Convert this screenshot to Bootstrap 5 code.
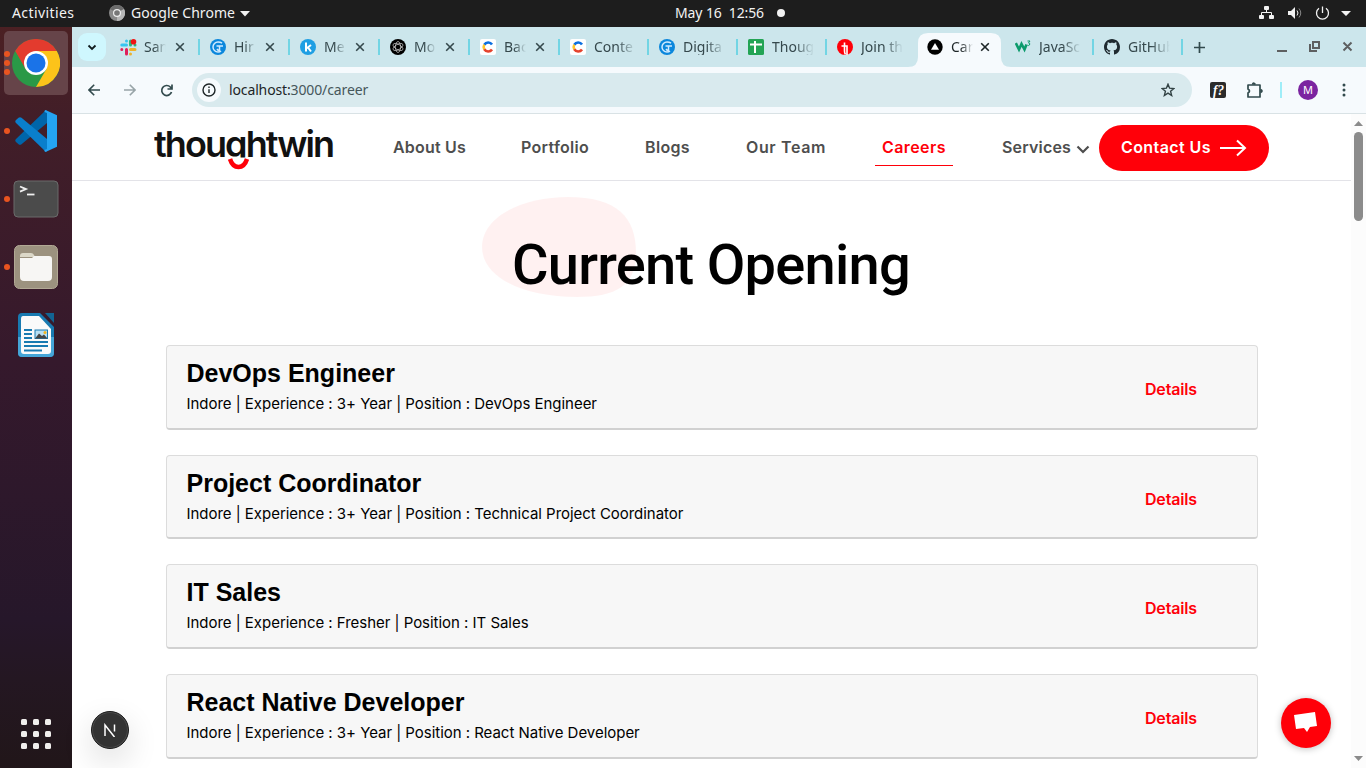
<!DOCTYPE html>
<html lang="en">
<head>
<meta charset="utf-8">
<meta name="viewport" content="width=device-width, initial-scale=1">
<title>Careers</title>
<link href="https://cdn.jsdelivr.net/npm/bootstrap@5.3.0/dist/css/bootstrap.min.css" rel="stylesheet">
<style>
body{width:1366px;height:768px;overflow:hidden;font-family:"Noto Sans",sans-serif;font-size:14px;line-height:1.2;color:#000}
svg{display:block;flex:none}
.sysbar{height:27px;background:#1d1d1d;color:#f2f2f2;font-size:14px}
.sysbar .act{margin-left:12px;letter-spacing:.4px}
.sysbar .app{left:131px;top:5px;letter-spacing:.05px}
.sysbar .clock{left:675px;top:5px;white-space:pre;letter-spacing:-.11px}
.dock{width:72px;background:linear-gradient(#4b2023 0,#421e28 12%,#35192c 45%,#26172a 80%,#241722 88%,#211619 100%)}
.tile{width:64px;height:64px;border-radius:5px}
.tile.on{background:#664449}
.dots{left:0;top:0;height:64px;width:6px;gap:3px}
.dots i{width:6px;height:6px;border-radius:50%;background:#e95420}
.strip{height:40px;background:#cce6ec;color:#35484c}
.strip-btn{width:28px;height:28px;border-radius:9px;background:#cff7fe;margin:0 4px 0 6px}
.tabx{width:90px;height:40px;padding-left:10px;position:relative}
.tabx.w89{width:89px}
.tabx.cur{width:88px;color:#1d2527}
.tabx.sep::after{content:"";position:absolute;right:0;top:12px;width:2px;height:16px;background:#72d5e4}
.tabx .lbl{width:22px;margin-left:8px;overflow:hidden;white-space:nowrap;-webkit-mask:linear-gradient(90deg,#000 45%,transparent);mask:linear-gradient(90deg,#000 45%,transparent)}
.tabx .lbl.long{width:42px;-webkit-mask-image:linear-gradient(90deg,#000 55%,transparent);mask-image:linear-gradient(90deg,#000 55%,transparent)}
.tabx .x{position:absolute;left:65px;top:15px}
.cur-shape{position:absolute;left:-9px;top:6px}
.tools{height:47px;background:#f6fafd;border-bottom:1px solid #d9e2e5;color:#324a4d}
.omni{width:1000px;height:34px;border-radius:17px;background:#d9eaee}
.omni .info{width:24px;height:24px;border-radius:50%;background:#f6fafd}
.omni .addr{margin-left:8px;color:#1d2527;letter-spacing:-.13px}
.site{height:654px;overflow:hidden}
.site-nav{height:67px;padding-top:2px;border-bottom:1px solid #e3e3e8;font-family:Inter,sans-serif;font-weight:600;font-size:16px;color:#4e4e4e}
.site-nav a{color:inherit;text-decoration:none;white-space:nowrap}
.site-nav a.item{width:73px;margin-left:58px;letter-spacing:.2px}
.site-nav a.port{width:68px;margin-left:55px;letter-spacing:.28px}
.site-nav a.blog{width:45px;margin-left:56px;letter-spacing:.34px}
.site-nav a.team{width:81px;margin-left:56px;letter-spacing:.62px}
.site-nav a.now{width:78px;height:36px;padding:8px 7px 0;margin-left:48px;border-bottom:1px solid #ff0009;letter-spacing:.42px;color:#ff0009}
.site-nav a.serv{width:69px;margin-left:49px;letter-spacing:.17px}
.logo{width:181px;height:42px;margin:1px 0 0 82px}
.cta{width:170px;height:46px;border-radius:23px;background:#ff0009;color:#fff!important;letter-spacing:.42px}
.hero-title{height:164px;font-family:Roboto,sans-serif;font-weight:500;font-size:56px;line-height:60px;letter-spacing:-.73px}
.jobs{padding:0 93px 0 94px;gap:25px}
.job{height:84.67px;border:1px solid #dcdcdc;border-bottom:2px solid #d1d1d1;border-radius:4px;background:#f7f7f7;padding:12px 20px 0 19.5px}
.job h2{font:700 25px/30px "Liberation Sans",sans-serif;margin:0}
.job p{font:400 15px/20px Inter,sans-serif;letter-spacing:-.03px;margin:6px 0 0}
.job a{font:600 16px/20px Inter,sans-serif;letter-spacing:-.15px;color:#ff0009;text-decoration:none;margin-right:40px;margin-top:21px}
.rail{width:15px;background:#fcfcfc}
.thumb{width:9px;height:89px;border-radius:5px;background:#8b8b8b}
.next-btn{left:91px;top:711px;width:38px;height:38px;border-radius:50%;background:#333;border:1.5px solid #1b1b1b;box-shadow:inset 0 0 0 1px #4b4b4b,0 12px 32px rgba(0,0,0,.14)}
.chat-btn{left:1281px;top:698px;width:50px;height:50px;border-radius:50%;background:#ff0009;box-shadow:0 1px 7px rgba(0,0,0,.25);padding:0 2px 3px 0}
</style>
</head>
<body class="d-flex flex-column">
<svg width="0" height="0" class="position-absolute">
<defs>
<symbol id="x" viewBox="0 0 10 10"><path d="M1.2 1.2l7.6 7.6M8.800 1.200L1.200 8.800" stroke="currentColor" stroke-width="1.6" fill="none"/></symbol>
<symbol id="gt" viewBox="0 0 16 16"><circle cx="8" cy="8" r="8" fill="#0b87dc"/><path d="M12 4.200Q10.500 3 8 3A5 5 0 1 0 8 13Q10 13 11 12M6.500 7H13M9.500 7v4.500Q8 11.500 7 10" stroke="#cfeaff" stroke-width="1.500" fill="none"/></symbol>
<symbol id="cu" viewBox="0 0 16 16"><rect width="16" height="16" rx="2" fill="#fff"/><g fill="none" stroke-width="2.600"><path d="M4.300 5.700A4.600 4.600 0 0 1 12 5.500" stroke="#0b6fe0"/><path d="M4.300 5.700A4.600 4.600 0 0 0 4.300 10.300" stroke="#ffc72c"/><path d="M4.300 10.300A4.600 4.600 0 0 0 12 10.500" stroke="#e5432d"/></g></symbol>
</defs>
</svg>

<header class="sysbar position-relative d-flex align-items-center flex-shrink-0">
<span class="act">Activities</span>
<svg class="position-absolute" style="left:109px;top:5px" width="16" height="16" viewBox="0 0 16 16"><circle cx="8" cy="8" r="8" fill="#8a8a8a"/><path d="M8 8L1 4A8 8 0 0 1 15 4Z" fill="#6c6c6c"/><path d="M8 8L15 4A8 8 0 0 1 8 16Z" fill="#b5b5b5"/><circle cx="8" cy="8" r="4" fill="#eee"/><circle cx="8" cy="8" r="2.800" fill="#777"/></svg>
<span class="app position-absolute">Google Chrome</span>
<svg class="position-absolute" style="left:240px;top:11px" width="10" height="6"><path d="M0 0h10L5 5.500z" fill="#f2f2f2"/></svg>
<span class="clock position-absolute">May 16  12:56</span>
<svg class="position-absolute" style="left:777px;top:9px" width="8" height="8"><circle cx="4" cy="4" r="4" fill="#f2f2f2"/></svg>
<svg class="position-absolute" style="left:1258px;top:5px" width="96" height="16" viewBox="0 0 96 16"><g fill="#f2f2f2"><rect x="6" y="1" width="5" height="4" rx="1"/><rect x="1" y="10" width="5" height="4" rx="1"/><rect x="11" y="10" width="5" height="4" rx="1"/><path d="M30 6h3l4-4v12l-4-4h-3zM83 6h10l-5 5z"/></g><g fill="none" stroke="#f2f2f2"><path d="M8.500 5v3M3.500 11V7.500h10V11M39 5.500q2 2.500 0 5"/><path d="M41 3.500q3.500 4.500 0 9" stroke="#888"/><path d="M61 3.300a6 6 0 1 0 7 0M64.500 1.500V8" stroke-width="1.300"/></g></svg>
</header>

<div class="d-flex flex-grow-1">
<aside class="dock d-flex flex-column align-items-center flex-shrink-0 position-relative pt-1 gap-1">
<div class="tile on d-flex align-items-center justify-content-center">
<svg width="48" height="48" viewBox="0 0 48 48"><circle cx="24" cy="24" r="24" fill="#2a9947"/><path d="M3.200 12A24 24 0 0 1 44.800 12H24L13.600 30Z" fill="#e33b2e"/><path d="M44.800 12A24 24 0 0 1 24 48L34.400 30 24 12Z" fill="#fcc31a"/><circle cx="24" cy="24" r="12" fill="#fff"/><circle cx="24" cy="24" r="9.500" fill="#1a73e8"/></svg></div>
<div class="tile d-flex align-items-center justify-content-center">
<svg width="42" height="42" viewBox="0 0 42 42"><path d="M1 29q-1.500 1.500 0 3l2.500 2.300q1.500 1 3 0L32 13V0.500L30 1Z" fill="#0065a9"/><path d="M1 13q-1.500-1.500 0-3l2.500-2.300q1.500-1 3 0L32 29v12.500L30 41Z" fill="#0a7fcc"/><path d="M30.500 0L42 5.200V36.800L30.500 42q-1.500-.5-1-2l2.500-1V3l-2.500-1q-.3-1.500 1-2Z" fill="#24a4f2"/></svg></div>
<div class="tile d-flex align-items-center justify-content-center">
<svg width="46" height="38" viewBox="0 0 46 38"><rect x="1" y="1" width="44" height="36" rx="4" fill="#4b4b4b" stroke="#6b6b6b"/><path d="M7 6.500l6 2.600-6 2.600" stroke="#eee" stroke-width="1.800" fill="none"/><path d="M14 14.500h7.500" stroke="#eee" stroke-width="1.800"/></svg></div>
<div class="tile d-flex align-items-center justify-content-center">
<svg width="46" height="46" viewBox="0 0 46 46"><rect x="1.500" y="1.500" width="43" height="43" rx="5" fill="#9c927f" stroke="#b2a995"/><path d="M7 12q0-3 3-3h8q2 0 3 2l1 2H7z" fill="#dcd8c8"/><path d="M7 14h12l2-2h15q3 0 3 3v18q0 4-4 4H11q-4 0-4-4z" fill="#f7f6f4"/></svg></div>
<div class="tile d-flex align-items-center justify-content-center">
<svg width="38" height="46" viewBox="0 0 38 46"><path d="M5 1h18l14 14v26q0 4-4 4H5q-4 0-4-4V5q0-4 4-4z" fill="#187ab1"/><path d="M1 25h36v16q0 4-4 4H5q-4 0-4-4z" fill="#45a5d7"/><path d="M6 4h16l12 13v22q0 3-3 3H7q-3 0-3-3V7q0-3 2-3z" fill="#fafafa"/><path d="M28 1h9v10z" fill="#126493"/><path d="M7 18h8M7 22h8M7 26h8M7 30h24M7 34h24M7 38.500h18" stroke="#187ab1" stroke-width="2"/><rect x="18" y="18" width="12.500" height="8.500" fill="#b9dff2" stroke="#187ab1"/><path d="M18 26.500l4-5 3 2.500 2-1.500 3.500 4z" fill="#444"/><circle cx="28" cy="20.500" r="1.500" fill="#f3b41b"/></svg></div>
<div class="dots position-absolute d-flex flex-column justify-content-center" style="left:4px;top:4px"><i></i><i></i><i></i></div>
<div class="dots position-absolute d-flex flex-column justify-content-center" style="left:4px;top:72px"><i></i></div>
<div class="dots position-absolute d-flex flex-column justify-content-center" style="left:4px;top:140px"><i></i></div>
<div class="dots position-absolute d-flex flex-column justify-content-center" style="left:4px;top:208px"><i></i></div>
<svg class="mt-auto" style="margin-bottom:19px" width="30" height="30" viewBox="0 0 30 30" fill="#f0eeec"><rect width="6" height="6" rx="1.500"/><rect x="12" width="6" height="6" rx="1.500"/><rect x="24" width="6" height="6" rx="1.500"/><rect y="12" width="6" height="6" rx="1.500"/><rect x="12" y="12" width="6" height="6" rx="1.500"/><rect x="24" y="12" width="6" height="6" rx="1.500"/><rect y="24" width="6" height="6" rx="1.500"/><rect x="12" y="24" width="6" height="6" rx="1.500"/><rect x="24" y="24" width="6" height="6" rx="1.500"/></svg>
</aside>

<div class="flex-grow-1 d-flex flex-column">
<div class="strip d-flex align-items-center flex-shrink-0">
<div class="strip-btn d-flex align-items-center justify-content-center"><svg width="10" height="7"><path d="M1.500 1.500L5 5l3.500-3.500" stroke="#101c1e" stroke-width="1.800" fill="none"/></svg></div>
<div class="tabx sep d-flex align-items-center"><svg width="17" height="17" viewBox="0 0 17 17" fill="none" stroke-width="3" stroke-linecap="round"><path d="M1.800 6H6.500M6.500 2v0" stroke="#36c5f0"/><path d="M10.500 2V6M15 6h0" stroke="#2eb67d"/><path d="M10.500 10.500H15M10.500 15v0" stroke="#ecb22e"/><path d="M6.500 10.500V15M1.800 10.500v0" stroke="#e01e5a"/><circle cx="13.500" cy="2.800" r="2.800" fill="#f01414" stroke="none"/></svg><span class="lbl" style="margin-left:7px">San</span><svg class="x" width="10" height="10"><use href="#x"/></svg></div>
<div class="tabx sep d-flex align-items-center"><svg width="16" height="16"><use href="#gt"/></svg><span class="lbl">Hir</span><svg class="x" width="10" height="10"><use href="#x"/></svg></div>
<div class="tabx sep d-flex align-items-center"><svg width="16" height="16" viewBox="0 0 16 16"><circle cx="8" cy="8" r="8" fill="#1f9fe3"/><path d="M6 3.500v9M11 6L6.800 9.300M8 8.500l3 4" stroke="#fff" stroke-width="2" fill="none"/></svg><span class="lbl">Me</span><svg class="x" width="10" height="10"><use href="#x"/></svg></div>
<div class="tabx sep d-flex align-items-center"><svg width="16" height="16" viewBox="0 0 16 16"><circle cx="8" cy="8" r="8" fill="#000"/><g fill="none" stroke="#ccc" stroke-width=".7"><ellipse cx="8" cy="8" rx="2.600" ry="5.500"/><ellipse cx="8" cy="8" rx="2.600" ry="5.500" transform="rotate(60 8 8)"/><ellipse cx="8" cy="8" rx="2.600" ry="5.500" transform="rotate(120 8 8)"/></g></svg><span class="lbl">Mo</span><svg class="x" width="10" height="10"><use href="#x"/></svg></div>
<div class="tabx sep d-flex align-items-center"><svg width="16" height="16"><use href="#cu"/></svg><span class="lbl">Bac</span><svg class="x" width="10" height="10"><use href="#x"/></svg></div>
<div class="tabx w89 sep d-flex align-items-center"><svg width="16" height="16"><use href="#cu"/></svg><span class="lbl long">Conte</span></div>
<div class="tabx w89 sep d-flex align-items-center"><svg width="16" height="16"><use href="#gt"/></svg><span class="lbl long">Digita</span></div>
<div class="tabx w89 sep d-flex align-items-center"><svg width="16" height="16"><rect width="16" height="16" rx="1.500" fill="#23a455"/><path d="M2 5.500h12M7 2v12" stroke="#fff" stroke-width="2"/></svg><span class="lbl long">Thoug</span></div>
<div class="tabx d-flex align-items-center"><svg width="16" height="16" viewBox="0 0 16 16"><circle cx="8" cy="8" r="8" fill="#ff0009"/><path d="M7.500 3.500V12q0 2 1 3.500M4.500 7h5.500v9" stroke="#fff" stroke-width="1.600" fill="none"/></svg><span class="lbl long">Join th</span></div>
<div class="tabx cur d-flex align-items-center"><svg class="cur-shape" width="104" height="34"><path d="M0 34Q10 34 10 24V10Q10 0 20 0H83Q93 0 93 10V24Q93 34 103 34Z" fill="#f6fafd"/></svg><svg class="position-relative" width="16" height="16"><circle cx="8" cy="8" r="7.700" fill="#000"/><path d="M8 4l4 6.800H4z" fill="#fff"/></svg><span class="lbl">Car</span><svg class="x" style="left:63px" width="10" height="10"><use href="#x"/></svg></div>
<div class="tabx w89 sep d-flex align-items-center"><svg width="16" height="16" fill="none" stroke="#0c9b6c" stroke-width="2.600"><path d="M.800 4L4 10.500 6.500 5 9.500 10.500 11.500 5.500"/><path d="M12.500 2h2.500l-1.500 2q2 .3 1 2-1 1-2 .200" stroke-width="1"/></svg><span class="lbl long">JavaSc</span></div>
<div class="tabx w89 sep d-flex align-items-center"><svg width="16" height="16" viewBox="0 0 16 16" fill="#1f2a30"><path d="M8 0C3.580 0 0 3.580 0 8c0 3.540 2.290 6.530 5.470 7.590.4.070.55-.17.55-.38 0-.19-.01-.82-.01-1.490-2.010.37-2.530-.49-2.690-.94-.09-.23-.48-.94-.82-1.130-.28-.15-.68-.52-.01-.53.63-.01 1.080.58 1.230.82.72 1.210 1.870.87 2.330.66.07-.52.28-.87.51-1.070-1.780-.2-3.640-.89-3.640-3.950 0-.87.31-1.590.82-2.150-.08-.2-.36-1.020.08-2.120 0 0 .67-.21 2.200.82.64-.18 1.320-.27 2-.27s1.360.09 2 .27c1.530-1.040 2.200-.82 2.200-.82.44 1.100.16 1.920.08 2.120.51.56.82 1.270.82 2.150 0 3.070-1.870 3.750-3.650 3.950.29.25.54.73.54 1.480 0 1.070-.01 1.930-.01 2.200 0 .21.15.46.55.38A8.010 8.010 0 0 0 16 8c0-4.420-3.580-8-8-8z"/></svg><span class="lbl long">GitHub</span></div>
<svg style="margin-left:11px" width="11" height="11"><path d="M5.500 0v11M0 5.500h11" stroke="#324a4d" stroke-width="1.700"/></svg>
<svg style="margin-left:72px" width="76" height="12" fill="none" stroke="#5d5f60" stroke-width="2"><path d="M0 10h10M36 1h6v6h-6zM33 3v7h7M66.500 1.500l8 8M74.500 1.500l-8 8"/></svg>
</div>

<div class="tools d-flex align-items-center flex-shrink-0">
<svg style="margin-left:16px" width="12" height="12" fill="none" stroke="#324a4d" stroke-width="1.600"><path d="M12 6H1M6.200.8L1 6l5.200 5.200"/></svg>
<svg style="margin-left:24px" width="12" height="12" fill="none" stroke="#98a4a8" stroke-width="1.600"><path d="M0 6h11M5.800.8L11 6l-5.200 5.200"/></svg>
<svg style="margin:0 19px 0 24px" width="13" height="13" fill="none" stroke="#324a4d" stroke-width="1.700"><path d="M11.500 8A5 5 0 1 1 10.300 3L12 4.800M12 .5V5H7.500"/></svg>
<div class="omni d-flex align-items-center"><span class="info d-flex align-items-center justify-content-center" style="margin-left:5px"><svg width="14" height="14" fill="none" stroke="#1d2527" stroke-width="1.400"><circle cx="7" cy="7" r="6"/><path d="M7 6.300V10M7 3.600V5"/></svg></span><span class="addr">localhost:<span style="color:#46575b">3000/career</span></span>
<svg class="ms-auto" style="margin-right:17px" width="14" height="14" viewBox="0 0 14 14" fill="none" stroke="#324244" stroke-width="1.400"><path d="M7 1.200l1.600 4 4.300.3-3.300 2.800 1.050 4.200L7 10.200l-3.650 2.300L4.400 8.300 1.100 5.500l4.300-.3z"/></svg></div>
<svg style="margin-left:18px" width="16" height="16"><rect width="16" height="16" rx="2" fill="#2b2b2b"/><text x="3" y="12.500" fill="#fff" font-family="Liberation Serif" font-size="14" font-style="italic" font-weight="700" textLength="11" lengthAdjust="spacingAndGlyphs">f?</text></svg>
<svg style="margin-left:20px" width="18" height="17" fill="none" stroke="#324a4d" stroke-width="1.700"><path d="M2 3h12v12H2V11q3-2 0-4z" stroke-linejoin="round"/><path d="M6.500 2.500q.8-3 2.800 0M14.500 7.500q3 1.500 0 3" fill="#324a4d"/></svg>
<i style="width:2px;height:16px;background:#9fedf8;margin-left:16px"></i>
<span class="rounded-circle d-flex align-items-center justify-content-center text-white" style="width:20px;height:20px;background:#7b24a0;margin-left:16px;font-size:11px">M</span>
<svg style="margin-left:24px" width="4" height="14" fill="#324a4d"><circle cx="2" cy="2" r="1.500"/><circle cx="2" cy="7" r="1.500"/><circle cx="2" cy="12" r="1.500"/></svg>
</div>

<div class="site d-flex bg-white">
<main class="flex-grow-1">
<nav class="site-nav d-flex align-items-center">
<svg class="logo" viewBox="0 0 181 42"><clipPath id="lg"><rect width="181" height="29.500"/></clipPath><text x="0" y="28.500" clip-path="url(#lg)" font-family="Inter" font-size="36" font-weight="600" fill="#111" textLength="181">thoughtwin</text><path d="M76 31Q78.500 39 84.500 39T93 31" fill="none" stroke="#ff0009" stroke-width="4.500"/></svg>
<a class="item" href="#">About Us</a>
<a class="port" href="#">Portfolio</a>
<a class="blog" href="#">Blogs</a>
<a class="team" href="#">Our Team</a>
<a class="now" href="#">Careers</a>
<a class="serv" href="#">Services</a>
<svg style="margin:2px 9px 0 5px" width="14" height="9"><path d="M1.500 1.500L7 7l5.500-5.500" stroke="#4e4e4e" stroke-width="2.200" fill="none"/></svg>
<a class="cta d-flex align-items-center" href="#"><span style="width:90px;margin-left:22px">Contact Us</span><svg style="margin-left:9px" width="27" height="18"><path d="M0 9h25M17 1.500L25 9l-8 7.500" stroke="#fff" stroke-width="2" fill="none"/></svg></a>
</nav>
<h1 class="hero-title m-0 position-relative"><svg class="position-absolute" style="left:410px;top:16px" width="154" height="100"><path d="M0 50C0 20 40 0 86 0C135 0 154 20 154 56C154 88 135 100 95 100C40 100 0 80 0 50Z" fill="#ff0009" fill-opacity=".055"/></svg><span class="position-absolute" style="left:440px;top:54px">Current Opening</span></h1>
<div class="jobs d-flex flex-column">
<article class="job d-flex justify-content-between flex-shrink-0"><div><h2>DevOps Engineer</h2><p>Indore | Experience : 3+ Year | Position : DevOps Engineer</p></div><a href="#">Details</a></article>
<article class="job d-flex justify-content-between flex-shrink-0"><div><h2>Project Coordinator</h2><p>Indore | Experience : 3+ Year | Position : Technical Project Coordinator</p></div><a href="#">Details</a></article>
<article class="job d-flex justify-content-between flex-shrink-0"><div><h2>IT Sales</h2><p>Indore | Experience : Fresher | Position : IT Sales</p></div><a href="#">Details</a></article>
<article class="job d-flex justify-content-between flex-shrink-0"><div><h2>React Native Developer</h2><p>Indore | Experience : 3+ Year | Position : React Native Developer</p></div><a href="#">Details</a></article>
</div>
</main>
<div class="rail d-flex flex-column align-items-center justify-content-between flex-shrink-0"><div><svg class="mx-auto" style="margin:7px 0 6px" width="9" height="5"><path d="M0 5h9L4.500 0z" fill="#8b8b8b"/></svg><div class="thumb"></div></div><svg style="margin-bottom:7px" width="9" height="5"><path d="M0 0h9L4.500 5z" fill="#8b8b8b"/></svg></div>
</div>
</div>
</div>
<div class="next-btn position-absolute d-flex align-items-center justify-content-center"><svg width="14" height="14" fill="none" stroke="#fff" stroke-width="1.500"><path d="M2 13V2l9.500 12"/><path d="M11.500 1.500v7"/></svg></div>
<div class="chat-btn position-absolute d-flex align-items-center justify-content-center"><svg width="24" height="22"><path d="M1 4L22 1l2 14-7 1-3 5-3-4-8 1z" fill="#fff"/></svg></div>
<script src="https://cdn.jsdelivr.net/npm/bootstrap@5.3.0/dist/js/bootstrap.bundle.min.js"></script>
</body>
</html>
